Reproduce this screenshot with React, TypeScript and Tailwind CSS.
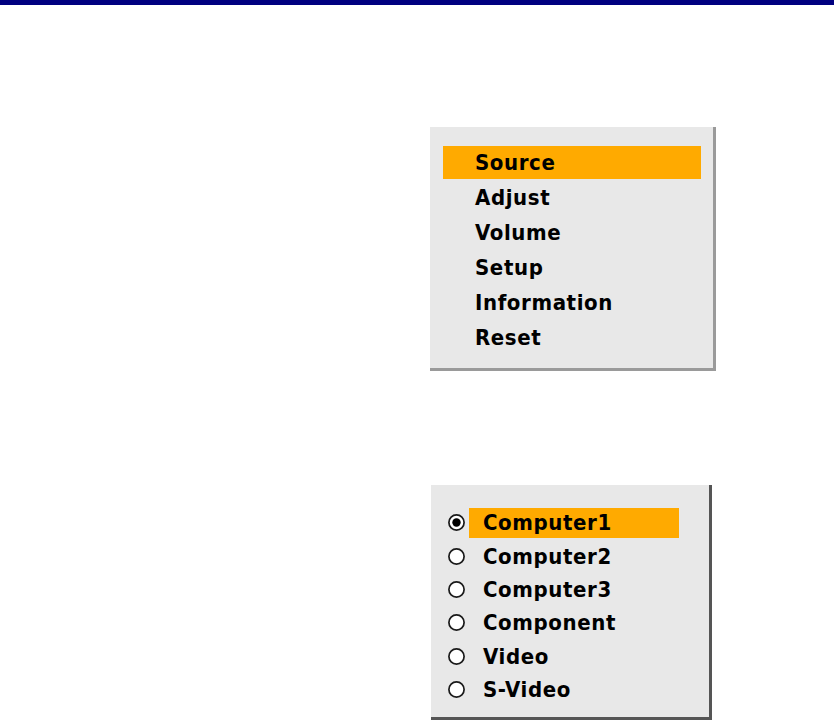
const MENU = ["Source", "Adjust", "Volume", "Setup", "Information", "Reset"];
const SOURCES = ["Computer1", "Computer2", "Computer3", "Component", "Video", "S-Video"];

const Radio = ({ checked }: { checked: boolean }) => (
  <svg width="19" height="19" viewBox="0 0 19 19" className="shrink-0">
    <circle cx="9.5" cy="9.5" r="7.6" fill="#fff" stroke="#1a1a1a" strokeWidth="1.7" />
    {checked && <circle cx="9.5" cy="9.5" r="4.2" fill="#000" />}
  </svg>
);

export default function App() {
  return (
    <div className="min-h-[720px] bg-white font-['DejaVu_Sans_Condensed','DejaVu_Sans',sans-serif] font-bold text-black">
      <div className="h-[5px] bg-[#000080]" />

      <div className="pl-[430px] pt-[122px]">
        <div className="w-[286px] bg-[#e8e8e8] border-r-[3px] border-b-[3px] border-[#9a9a9a] pl-[13px] pr-[12px] pt-[19px] pb-[12px]">
          {MENU.map((item, i) => (
            <div key={item} className="h-[35px] flex items-start">
              <div
                className={`w-full h-[33px] flex items-center pl-[32px] text-[22px] tracking-[0.6px] ${i === 0 ? "bg-[#ffaa00]" : ""}`}
              >
                {item}
              </div>
            </div>
          ))}
        </div>
      </div>

      <div className="pl-[431px] pt-[114px]">
        <div className="w-[281px] h-[235px] bg-[#e8e8e8] border-r-[3px] border-b-[3px] border-[#555] pl-[16px] pt-[21px]">
          {SOURCES.map((item, i) => (
            <div key={item} className="h-[33.4px] flex items-center">
              <Radio checked={i === 0} />
              <div
                className={`ml-[3px] h-[30px] w-[210px] flex items-center pl-[14px] text-[22px] tracking-[0.6px] ${i === 0 ? "bg-[#ffaa00]" : ""}`}
              >
                {item}
              </div>
            </div>
          ))}
        </div>
      </div>
    </div>
  );
}
